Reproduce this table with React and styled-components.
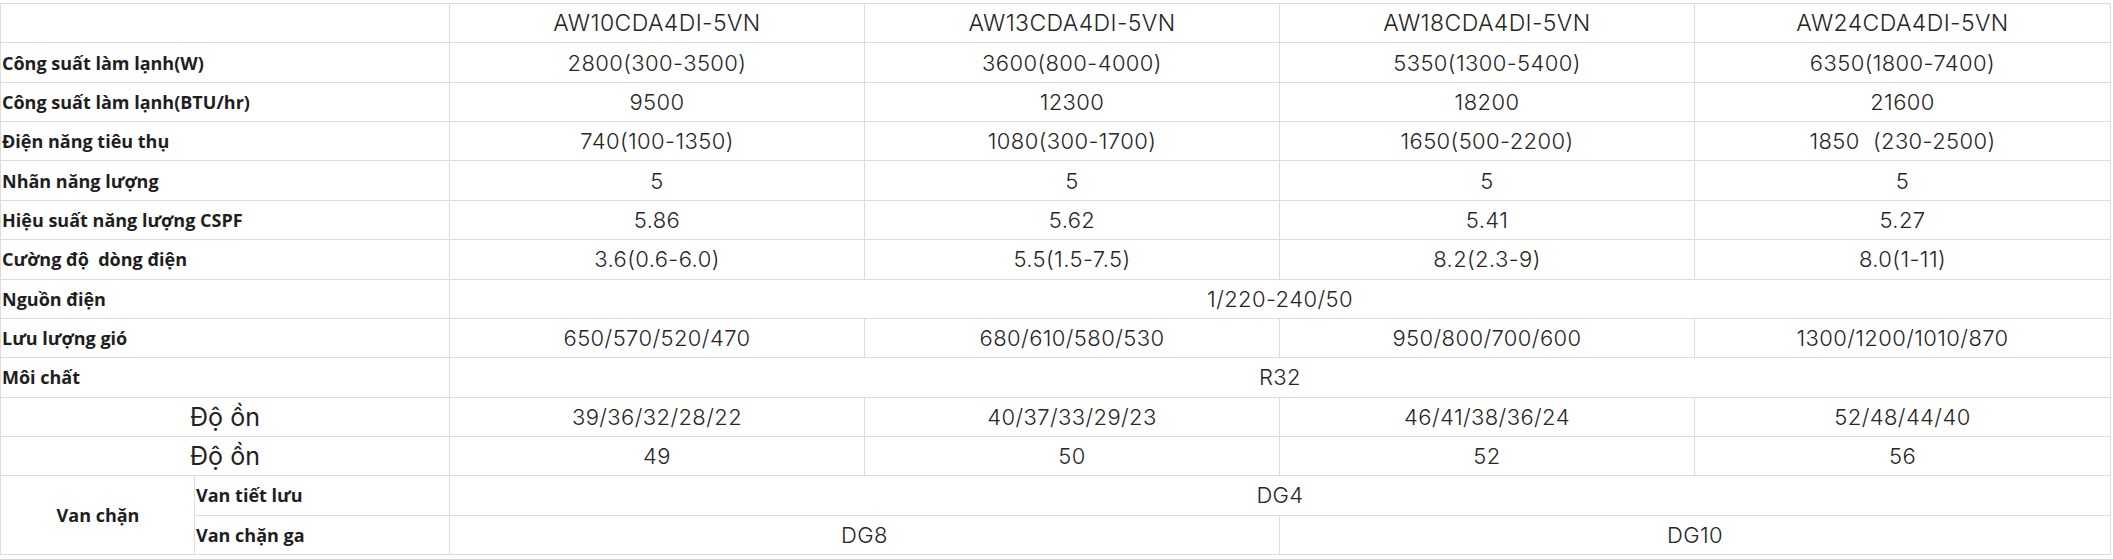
import React from 'react';
import styled, { createGlobalStyle } from 'styled-components';

const GlobalStyle = createGlobalStyle`
  html, body {
    margin: 0;
    padding: 0;
    background: #fff;
  }
`;

const Page = styled.div`
  padding-top: 3px;
`;

const SpecTable = styled.table`
  width: 2110px;
  border-collapse: collapse;
  table-layout: fixed;
  color: #2b2b2b;
`;

const Row = styled.tr`
  height: 39.36px;
`;

const Cell = styled.td`
  border: 1px solid #dcdcdc;
  padding: 0;
  vertical-align: middle;
  white-space: pre;
  overflow: hidden;
`;

const Label = styled(Cell)`
  font-family: "Open Sans", "Noto Sans", sans-serif;
  font-weight: 700;
  font-size: 18px;
  font-stretch: 88%;
  color: #1e1e1e;
  padding-left: 1px;
  text-align: ${(p) => (p.$center ? 'center' : 'left')};
`;

const BigLabel = styled(Cell)`
  font-family: Inter, "Noto Sans", sans-serif;
  font-weight: 400;
  font-size: 25px;
  color: #222;
  text-align: center;
`;

const Value = styled(Cell)`
  font-family: Inter, "Noto Sans", sans-serif;
  font-weight: 300;
  font-size: ${(p) => (p.$head ? '23px' : '22px')};
  letter-spacing: 0.4px;
  color: #262626;
  text-align: center;
`;

const models = ['AW10CDA4DI-5VN', 'AW13CDA4DI-5VN', 'AW18CDA4DI-5VN', 'AW24CDA4DI-5VN'];

const specs = [
  { label: 'Công suất làm lạnh(W)', values: ['2800(300-3500)', '3600(800-4000)', '5350(1300-5400)', '6350(1800-7400)'] },
  { label: 'Công suất làm lạnh(BTU/hr)', values: ['9500', '12300', '18200', '21600'] },
  { label: 'Điện năng tiêu thụ', values: ['740(100-1350)', '1080(300-1700)', '1650(500-2200)', '1850  (230-2500)'] },
  { label: 'Nhãn năng lượng', values: ['5', '5', '5', '5'] },
  { label: 'Hiệu suất năng lượng CSPF', values: ['5.86', '5.62', '5.41', '5.27'] },
  { label: 'Cường độ  dòng điện', values: ['3.6(0.6-6.0)', '5.5(1.5-7.5)', '8.2(2.3-9)', '8.0(1-11)'] },
  { label: 'Nguồn điện', all: '1/220-240/50' },
  { label: 'Lưu lượng gió', values: ['650/570/520/470', '680/610/580/530', '950/800/700/600', '1300/1200/1010/870'] },
  { label: 'Môi chất', all: 'R32' },
];

const noise = [
  ['39/36/32/28/22', '40/37/33/29/23', '46/41/38/36/24', '52/48/44/40'],
  ['49', '50', '52', '56'],
];

export default function App() {
  return (
    <Page>
      <GlobalStyle />
      <SpecTable>
        <colgroup>
          <col style={{ width: '194px' }} />
          <col style={{ width: '255px' }} />
          <col style={{ width: '415px' }} />
          <col style={{ width: '415px' }} />
          <col style={{ width: '415px' }} />
          <col style={{ width: '416px' }} />
        </colgroup>
        <tbody>
          <Row>
            <Label colSpan={2} />
            {models.map((m) => (
              <Value $head key={m}>{m}</Value>
            ))}
          </Row>
          {specs.map((s) => (
            <Row key={s.label}>
              <Label colSpan={2}>{s.label}</Label>
              {s.all ? (
                <Value colSpan={4}>{s.all}</Value>
              ) : (
                s.values.map((v, i) => <Value key={i}>{v}</Value>)
              )}
            </Row>
          ))}
          {noise.map((vals, r) => (
            <Row key={`noise_${r}`}>
              <BigLabel colSpan={2}>Độ ồn</BigLabel>
              {vals.map((v, i) => (
                <Value key={i}>{v}</Value>
              ))}
            </Row>
          ))}
          <Row>
            <Label $center rowSpan={2}>Van chặn</Label>
            <Label>Van tiết lưu</Label>
            <Value colSpan={4}>DG4</Value>
          </Row>
          <Row>
            <Label>Van chặn ga</Label>
            <Value colSpan={2}>DG8</Value>
            <Value colSpan={2}>DG10</Value>
          </Row>
        </tbody>
      </SpecTable>
    </Page>
  );
}
